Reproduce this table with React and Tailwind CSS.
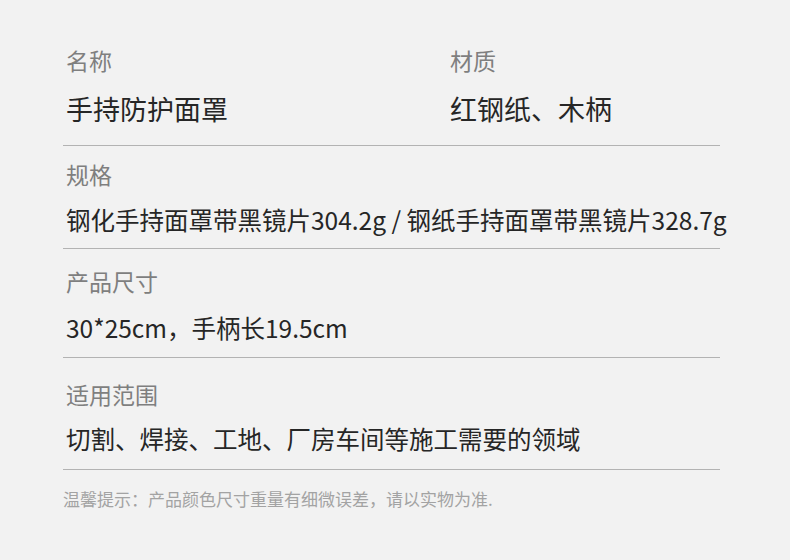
const font = { fontFamily: '"Noto Sans CJK SC", "Noto Sans", sans-serif' };

// ─── 一行参数：标签 + 内容 ─────────────────────────────────────────────
function Field({ label, value, gap }) {
  return (
    <div className="pl-[3px]">
      <p className="text-[23px] leading-[30px] text-[#7f7f7f]">{label}</p>
      <p className={`text-[24.5px] leading-[32px] text-[#262626] whitespace-nowrap ${gap}`}>{value}</p>
    </div>
  );
}

export default function App() {
  return (
    <div className="w-[790px] h-[560px] bg-[#f2f2f2] overflow-hidden" style={font}>
      <div className="ml-[63px] w-[657px]">

        {/* 名称 / 材质 */}
        <section className="pt-[45px] pb-[18px] border-b border-[#b3b3b3] flex">
          <div className="w-[386px] pl-[3px]">
            <p className="text-[23px] leading-[30px] text-[#7f7f7f]">名称</p>
            <p className="text-[27px] leading-[36px] text-[#262626] mt-[16px]">手持防护面罩</p>
          </div>
          <div className="pl-[1px]">
            <p className="text-[23px] leading-[30px] text-[#7f7f7f]">材质</p>
            <p className="text-[27px] leading-[36px] text-[#262626] mt-[16px]">红钢纸、木柄</p>
          </div>
        </section>

        {/* 规格 */}
        <section className="pt-[13px] pb-[12px] border-b border-[#b3b3b3]">
          <Field
            label="规格"
            value="钢化手持面罩带黑镜片304.2g / 钢纸手持面罩带黑镜片328.7g"
            gap="mt-[15px]"
          />
        </section>

        {/* 产品尺寸 */}
        <section className="pt-[17px] pb-[13px] border-b border-[#b3b3b3]">
          <Field label="产品尺寸" value="30*25cm，手柄长19.5cm" gap="mt-[16px]" />
        </section>

        {/* 适用范围 */}
        <section className="pt-[21px] pb-[14px] border-b border-[#b3b3b3]">
          <Field
            label="适用范围"
            value="切割、焊接、工地、厂房车间等施工需要的领域"
            gap="mt-[14px]"
          />
        </section>

        {/* 温馨提示 */}
        <p className="pt-[16px] text-[17px] leading-[26px] text-[#a3a3a3]">
          温馨提示：产品颜色尺寸重量有细微误差，请以实物为准.
        </p>
      </div>
    </div>
  );
}
